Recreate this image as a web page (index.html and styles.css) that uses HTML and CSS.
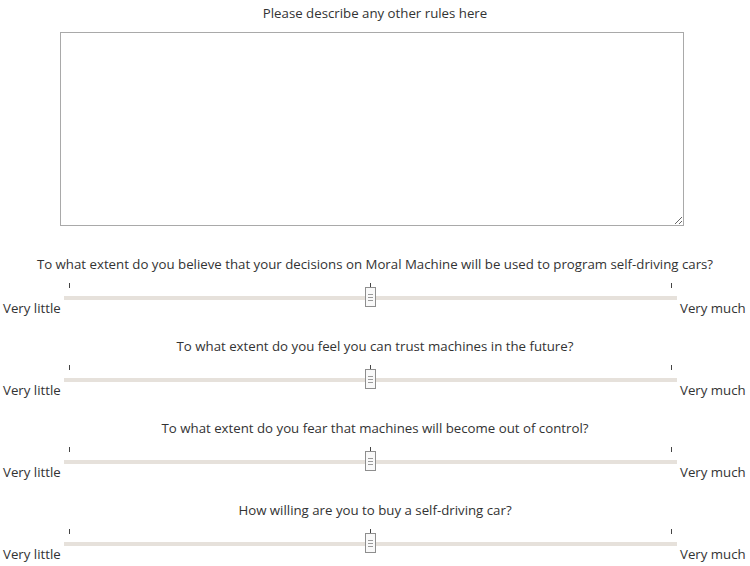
FILE: index.html
```html
<!DOCTYPE html>
<html>
<head>
<meta charset="utf-8">
<link rel="stylesheet" href="styles.css">
</head>
<body>
<div class="page">
  <div class="field">
    <div class="question">Please describe any other rules here</div>
    <textarea class="rules"></textarea>
  </div>

  <div class="block">
    <div class="question">To what extent do you believe that your decisions on Moral Machine will be used to program self-driving cars?</div>
    <div class="row">
      <span class="label left">Very little</span>
      <div class="slider">
        <div class="ticks"><i></i><i></i><i></i></div>
        <div class="track"></div>
        <div class="handle"><b></b><b></b><b></b></div>
      </div>
      <span class="label right">Very much</span>
    </div>
  </div>

  <div class="block">
    <div class="question">To what extent do you feel you can trust machines in the future?</div>
    <div class="row">
      <span class="label left">Very little</span>
      <div class="slider">
        <div class="ticks"><i></i><i></i><i></i></div>
        <div class="track"></div>
        <div class="handle"><b></b><b></b><b></b></div>
      </div>
      <span class="label right">Very much</span>
    </div>
  </div>

  <div class="block">
    <div class="question">To what extent do you fear that machines will become out of control?</div>
    <div class="row">
      <span class="label left">Very little</span>
      <div class="slider">
        <div class="ticks"><i></i><i></i><i></i></div>
        <div class="track"></div>
        <div class="handle"><b></b><b></b><b></b></div>
      </div>
      <span class="label right">Very much</span>
    </div>
  </div>

  <div class="block">
    <div class="question">How willing are you to buy a self-driving car?</div>
    <div class="row">
      <span class="label left">Very little</span>
      <div class="slider">
        <div class="ticks"><i></i><i></i><i></i></div>
        <div class="track"></div>
        <div class="handle"><b></b><b></b><b></b></div>
      </div>
      <span class="label right">Very much</span>
    </div>
  </div>
</div>
</body>
</html>
```

FILE: styles.css
```css
html, body {
  margin: 0;
  padding: 0;
  background: #ffffff;
}

body {
  font-family: "Open Sans", "DejaVu Sans", sans-serif;
  font-size: 13.25px;
  color: #333333;
}

.page {
  padding-top: 3px;
}

.question {
  text-align: center;
  line-height: 20px;
  height: 20px;
}

.field {
  display: flex;
  flex-direction: column;
}

.rules {
  display: block;
  box-sizing: border-box;
  margin: 9px 0 0 60px;
  width: 624px;
  height: 194px;
  border: 1px solid #a9a9a9;
  padding: 2px;
  background: #ffffff;
  font-family: inherit;
}

.block {
  margin-top: 28px;
}

.block + .block {
  margin-top: 18px;
}

.row {
  display: flex;
  align-items: flex-start;
  height: 44px;
  padding-left: 3px;
}

.label {
  align-self: flex-end;
  line-height: 20px;
  white-space: nowrap;
}

.label.left {
  width: 61px;
}

.label.right {
  margin-left: 3px;
}

.slider {
  position: relative;
  width: 613px;
  height: 44px;
}

.ticks {
  display: flex;
  justify-content: space-between;
  padding: 0 5px 0 5px;
  margin-top: 9px;
  height: 5px;
}

.ticks i {
  display: block;
  width: 1px;
  height: 5px;
  background: #444444;
}

.track {
  margin-top: 8px;
  height: 4px;
  background: #e6e1db;
}

.handle {
  position: absolute;
  left: 301px;
  top: 13px;
  box-sizing: border-box;
  width: 11px;
  height: 20px;
  border: 1px solid #8e8e8e;
  background: #f9f9f9;
  display: flex;
  flex-direction: column;
  justify-content: center;
  align-items: center;
  gap: 2px;
}

.handle b {
  display: block;
  width: 5px;
  height: 1px;
  background: #9a9a9a;
}
```
